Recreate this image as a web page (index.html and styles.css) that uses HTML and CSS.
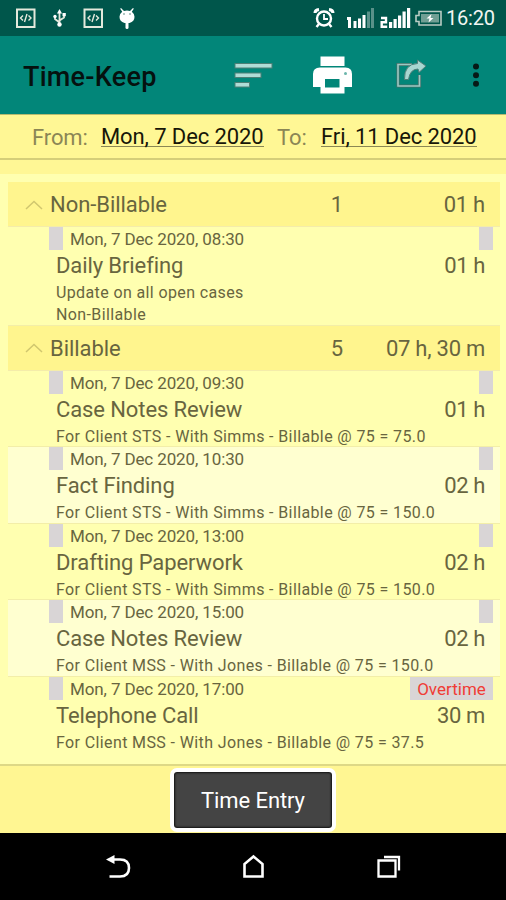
FILE: index.html
```html
<!DOCTYPE html>
<html lang="en">
    <head>
        <meta charset="utf-8" />
        <meta name="viewport" content="width=device-width,initial-scale=1" />
        <title>Time-Keep</title>
        <link rel="stylesheet" href="styles.css">
    </head>

    <body>
        <div class="app">
            <div class="status-bar">
                <svg class="status-icons" width="140" height="36" viewBox="0 0 140 36">
                    <g fill="none" stroke="#e4e9dc" stroke-width="2">
                        <rect x="17" y="9.500" width="17.500" height="17.500" />
                        <rect x="84.500" y="9.500" width="17.500" height="17.500" />
                        <path d="M23 15.500l-2.500 2.500 2.500 2.500M28.500 15.500l2.500 2.500-2.500 2.500M27 14l-2.500 8M90.500 15.500l-2.500 2.500 2.500 2.500M96 15.500l2.500 2.500-2.500 2.500M94.500 14l-2.500 8" stroke-width="1.400" />
                        <path d="M59.500 13v11M59.500 22.500l-4.500-3.500v-3M59.500 20.500l4.500-3v-3" stroke-width="1.800" />
                    </g>
                    <g fill="#fff">
                        <path d="M59.500 9l-2.500 4.500h5z" />
                        <circle cx="59.500" cy="24.500" r="2.200" />
                        <circle cx="55" cy="16.500" r="1.700" />
                        <path d="M62.500 13h3.300v3.300h-3.300z" />
                        <path d="M121 8l3 3q3-1 6 0l3-3 .8.800-2 3q2.700 2 2.700 5 0 5-5 6.200h-5q-5-1.200-5-6.200 0-3 2.700-5l-2-3z" />
                        <rect x="125.500" y="22" width="3" height="7" rx="1.500" />
                    </g>
                    <g fill="#4d8077">
                        <circle cx="124" cy="14" r=".8" />
                        <circle cx="130" cy="14" r=".8" />
                    </g>
                </svg>
                <svg class="system-icons" width="130" height="36" viewBox="312 0 130 36">
                    <g fill="none" stroke="#fff">
                        <circle cx="324" cy="18.500" r="7" stroke-width="2.400" />
                        <path d="M324 14v5h4" stroke-width="1.800" />
                        <path d="M315 13q0-3 4-3.500M333 13q0-3-4-3.500" stroke-width="3" />
                        <path d="M319 24l-2.500 3M329 24l2.500 3" stroke-width="2.400" />
                    </g>
                    <g fill="#fff">
                        <path d="M347 17h4v11h-3v-8h-1z" />
                        <path d="M353.500 21h3v7h-3zM358 18.500h3v9.500h-3zM362.500 15h3v13h-3z" />
                        <path d="M367 11.500h3v16.500h-3zM371 8h3v20h-3z" opacity=".35" />
                        <path d="M389 22h3.200v6h-3.200zM393.500 19h3.200v9h-3.200zM398 15.500h3.200v12.500h-3.200zM402.500 11.500h3.200v16.500h-3.200zM407 8h3.200v20h-3.200z" />
                    </g>
                    <path d="M381 18h5v4.300h-4.300v4.500h5.500" fill="none" stroke="#fff" stroke-width="2.400" />
                    <path d="M419 11.500h22v13.500h-22v-3.500h-3v-6h3z" fill="none" stroke="#b9ccc4" stroke-width="1.600" />
                    <rect x="421" y="14" width="18" height="8.500" fill="#709f94" />
                    <path d="M431.500 14l-5 4.500h3l-1 4 5-4.500h-3z" fill="#fff" />
                </svg>
                <span class="clock">16:20</span>
            </div>

            <div class="toolbar">
                <h1 class="toolbar-title">Time-Keep</h1>
                <svg class="toolbar-icons" width="272" height="78" viewBox="228 36 272 78">
                    <g stroke="#4c7f76" stroke-width="1" fill="#b0dcd6">
                        <rect x="235" y="63.500" width="37" height="4.500" />
                        <rect x="235" y="73" width="26" height="4.500" />
                        <rect x="235" y="82.500" width="14.500" height="4.500" />
                    </g>
                    <path d="M320.500 56.500h24v9.500h-24zM320 67.500h25.500q6.500 0 6.500 6.500v13h-7.500v6.500h-24v-6.500h-7.500v-13q0-6.500 7-6.500zM325 79v8.500h14.500v-8.500z" fill="#fff" fill-rule="evenodd" />
                    <circle cx="345.500" cy="73.500" r="1.500" fill="#6bb5ab" />
                    <path d="M412 64.500h-14v21.500h21.500v-11" fill="none" stroke="#456f69" stroke-width="3.200" />
                    <path d="M412 64.500h-14v21.500h21.500v-11" fill="none" stroke="#9bcac4" stroke-width="1.600" />
                    <path d="M404.500 79.500q-.5-15.500 13-16v-3.500l8.500 6-7 6.500-1-3.500q-8 0-9.500 10.500z" fill="#a8d6d1" stroke="#4f7e78" stroke-width="1" />
                    <g fill="#071916">
                        <circle cx="476" cy="66.500" r="3" />
                        <circle cx="476" cy="75.200" r="3" />
                        <circle cx="476" cy="83.700" r="3" />
                    </g>
                </svg>
            </div>

            <div class="date-range">
                <span class="range-label">From:</span>
                <span class="range-date from-date">Mon, 7 Dec 2020</span>
                <span class="range-label to-label">To:</span>
                <span class="range-date to-date">Fri, 11 Dec 2020</span>
            </div>

            <div class="list">
                <div class="group">
                    <svg class="chevron" width="18" height="10" viewBox="0 0 18 10"><path d="M1 9l8-7.500 8 7.500" /></svg>
                    <span class="group-name">Non-Billable</span>
                    <span class="group-count">1</span>
                    <span class="group-total">01 h</span>
                </div>
                <div class="entry entry-tall">
                    <div class="entry-top"><i class="tag"></i><span class="entry-date">Mon, 7 Dec 2020, 08:30</span><i class="tag"></i></div>
                    <div class="entry-main"><span class="entry-title">Daily Briefing</span><span class="entry-time">01 h</span></div>
                    <div class="entry-note">Update on all open cases</div>
                    <div class="entry-note">Non-Billable</div>
                </div>

                <div class="group">
                    <svg class="chevron" width="18" height="10" viewBox="0 0 18 10"><path d="M1 9l8-7.500 8 7.500" /></svg>
                    <span class="group-name">Billable</span>
                    <span class="group-count">5</span>
                    <span class="group-total">07 h, 30 m</span>
                </div>
                <div class="entry">
                    <div class="entry-top"><i class="tag"></i><span class="entry-date">Mon, 7 Dec 2020, 09:30</span><i class="tag"></i></div>
                    <div class="entry-main"><span class="entry-title">Case Notes Review</span><span class="entry-time">01 h</span></div>
                    <div class="entry-note">For Client STS - With Simms - Billable @ 75 = 75.0</div>
                </div>
                <div class="entry entry-alt">
                    <div class="entry-top"><i class="tag"></i><span class="entry-date">Mon, 7 Dec 2020, 10:30</span><i class="tag"></i></div>
                    <div class="entry-main"><span class="entry-title">Fact Finding</span><span class="entry-time">02 h</span></div>
                    <div class="entry-note">For Client STS - With Simms - Billable @ 75 = 150.0</div>
                </div>
                <div class="entry">
                    <div class="entry-top"><i class="tag"></i><span class="entry-date">Mon, 7 Dec 2020, 13:00</span><i class="tag"></i></div>
                    <div class="entry-main"><span class="entry-title">Drafting Paperwork</span><span class="entry-time">02 h</span></div>
                    <div class="entry-note">For Client STS - With Simms - Billable @ 75 = 150.0</div>
                </div>
                <div class="entry entry-alt">
                    <div class="entry-top"><i class="tag"></i><span class="entry-date">Mon, 7 Dec 2020, 15:00</span><i class="tag"></i></div>
                    <div class="entry-main"><span class="entry-title">Case Notes Review</span><span class="entry-time">02 h</span></div>
                    <div class="entry-note">For Client MSS - With Jones - Billable @ 75 = 150.0</div>
                </div>
                <div class="entry">
                    <div class="entry-top"><i class="tag"></i><span class="entry-date">Mon, 7 Dec 2020, 17:00</span><span class="tag overtime">Overtime</span></div>
                    <div class="entry-main"><span class="entry-title">Telephone Call</span><span class="entry-time">30 m</span></div>
                    <div class="entry-note">For Client MSS - With Jones - Billable @ 75 = 37.5</div>
                </div>
            </div>

            <div class="footer">
                <button class="entry-button" type="button">Time Entry</button>
            </div>

            <div class="nav-bar">
                <svg width="506" height="67" viewBox="0 833 506 67">
                    <g fill="none" stroke="#fff" stroke-width="2.600">
                        <path d="M112 859.500h8q9 0 9 8.500t-9 8.500h-10.500" />
                        <path d="M244.500 876.500v-12.500l9-7.500 9 7.500v12.500z" />
                        <path d="M378.500 860.500h17v16h-17zM384 857h15v13.500" stroke-width="2.300" />
                    </g>
                    <path d="M106 859.500l8.500-4.500v9z" fill="#fff" />
                </svg>
            </div>
        </div>
    </body>
</html>
```

FILE: styles.css
```css
* {
    box-sizing: border-box;
}
body {
    margin: 0;
    font-family: Roboto, "Liberation Sans", sans-serif;
    color: #68653f;
}
.app {
    display: flex;
    flex-direction: column;
    width: 506px;
    height: 900px;
    overflow: hidden;
    background: #ffffb0;
}
.status-bar {
    display: flex;
    align-items: center;
    height: 36px;
    padding-right: 11px;
    background: #00564b;
}
.system-icons {
    margin-left: auto;
}
.clock {
    width: 49px;
    margin-left: 4px;
    font-size: 20px;
    line-height: 36px;
    letter-spacing: -0.2px;
    color: #f2f6f2;
    white-space: nowrap;
}
.toolbar {
    display: flex;
    align-items: center;
    justify-content: space-between;
    height: 78px;
    padding: 0 6px 0 23px;
    background: #028679;
}
.toolbar-title {
    margin: 0;
    padding-top: 3px;
    font-size: 27px;
    font-weight: 500;
    letter-spacing: 0.25px;
    color: #05110f;
    white-space: nowrap;
}
.date-range {
    display: flex;
    height: 46px;
    padding-left: 32px;
    background: #fff795;
    border-top: 1px solid #b5ba70;
    border-bottom: 2px solid #d5ce79;
    font-size: 22px;
    line-height: 45px;
    letter-spacing: -0.1px;
    white-space: nowrap;
}
.range-label {
    width: 69px;
    color: #8b8655;
}
.to-label {
    width: 44px;
}
.range-date {
    align-self: flex-start;
    height: 23px;
    margin-top: 9px;
    line-height: 26px;
    color: #171608;
    border-bottom: 1px solid #8b8754;
}
.from-date {
    width: 163px;
    margin-right: 13px;
}
.to-date {
    width: 156px;
}
.list {
    flex: 1;
    padding: 8px 6px 0 8px;
    border-top: 14px solid #fff795;
}
.group {
    display: flex;
    align-items: center;
    height: 45px;
    padding: 1px 15px 0 17px;
    background: #fff58e;
    border-bottom: 1px solid #f4ecaa;
    font-size: 22px;
    letter-spacing: -0.05px;
}
.chevron {
    margin-right: 7px;
    fill: none;
    stroke: #d0c66f;
    stroke-width: 1.5;
}
.group-name {
    width: 272px;
}
.group-count {
    width: 30px;
    text-align: center;
}
.group-total {
    flex: 1;
    text-align: right;
    letter-spacing: -0.25px;
}
.entry {
    height: 76.6px;
    border-bottom: 1px solid #f3eea8;
    white-space: nowrap;
}
.entry-tall {
    height: 98.5px;
}
.entry-alt {
    background: #ffffd0;
}
.entry:last-child {
    border-bottom: 0;
}
.entry-top {
    display: flex;
    height: 23px;
    padding: 0 7px 0 41px;
}
.tag {
    width: 14px;
    height: 23px;
    background: #d9d5d6;
}
.entry-date {
    flex: 1;
    padding-left: 7px;
    font-size: 17px;
    line-height: 24px;
    letter-spacing: -0.12px;
}
.overtime {
    width: 83px;
    text-align: center;
    font-size: 17px;
    line-height: 24px;
    color: #f03c35;
}
.entry-main {
    display: flex;
    justify-content: space-between;
    height: 32px;
    padding: 0 15px 0 48px;
    font-size: 22px;
    line-height: 31px;
    letter-spacing: -0.1px;
}
.entry-time {
    letter-spacing: -0.4px;
}
.entry-note {
    height: 22px;
    padding-left: 48px;
    font-size: 16px;
    line-height: 21px;
    letter-spacing: 0.38px;
}
.footer {
    display: flex;
    justify-content: center;
    height: 69px;
    padding-top: 2px;
    background: #fff692;
    border-top: 2px solid #ddd886;
}
.entry-button {
    width: 166px;
    height: 64px;
    padding: 0;
    border: 4px solid #fff;
    border-radius: 7px;
    background: #444;
    box-shadow: inset 0 0 2px 1px #111;
    font-family: inherit;
    font-size: 22px;
    letter-spacing: -0.1px;
    color: #fff;
}
.nav-bar {
    height: 67px;
    background: #000;
}
.nav-bar svg {
    display: block;
}
```
